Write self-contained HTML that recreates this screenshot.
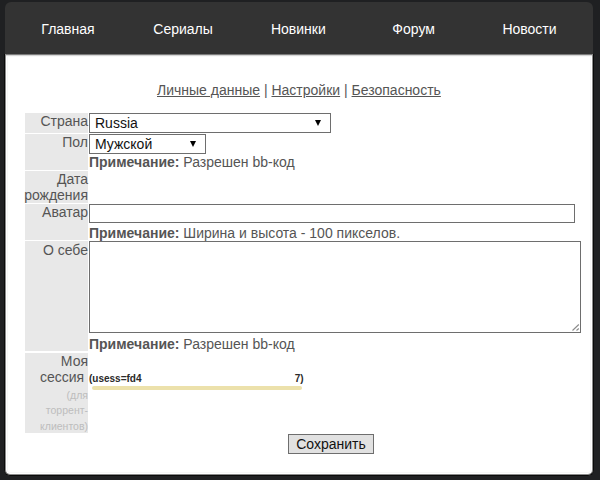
<!DOCTYPE html>
<html><head><meta charset="utf-8">
<style>
*{box-sizing:border-box}
html,body{margin:0;padding:0}
body{width:600px;height:480px;background:#1f2022;position:relative;overflow:hidden;font-family:"Liberation Sans",sans-serif;font-size:14px;line-height:16px;color:#555}
#wrap{position:absolute;left:4px;top:54px;width:590px;height:422px;border-radius:0 0 6px 6px;background:#fff;border:1px solid #0a0a0a;border-top:none;box-shadow:inset 1px 0 #8a8a8a,inset -1px 0 #8a8a8a,inset 0 -1px #8a8a8a,inset 2px 0 #fff,inset -2px 0 #fff,inset 0 -2px #fff,inset 3px 0 #f7f7f7,inset -3px 0 #f7f7f7,inset 0 -3px #f7f7f7}
#hdr{position:absolute;left:5px;top:2px;width:588px;height:52px;background:#333;border-radius:6px 6px 0 0}
.a{position:absolute;white-space:nowrap}
.ni{position:absolute;top:21px;color:#fff;text-align:center;width:115px;white-space:nowrap}
.cell{position:absolute;left:25px;width:63px;background:#e8e8e8}
.lb{position:absolute;right:0;text-align:right;white-space:nowrap;color:#555}
.box{position:absolute;border:1px solid #6e6e6e;background:#fff}
.arr{position:absolute;width:0;height:0;border-left:3.5px solid transparent;border-right:3.5px solid transparent;border-top:6px solid #000}
.note{position:absolute;left:89px;white-space:nowrap;color:#555}
.sm{position:absolute;right:0;text-align:right;white-space:nowrap;font-size:10.5px;line-height:15.5px;color:#bdbdbd}
</style></head><body>
<div id="wrap"></div>
<div id="hdr"></div>
<div style="position:absolute;left:6px;top:54px;width:586px;height:3px;background:linear-gradient(#7a7a7a 0,#7a7a7a 1px,#d6d6d6 1px,#d6d6d6 2px,#f8f8f8 2px)"></div>
<div class="ni" style="left:10.5px">Главная</div>
<div class="ni" style="left:125.6px">Сериалы</div>
<div class="ni" style="left:240.8px">Новинки</div>
<div class="ni" style="left:356.1px">Форум</div>
<div class="ni" style="left:472px">Новости</div>

<div class="a" style="left:157px;top:82px;color:#555"><u>Личные данные</u> | <u>Настройки</u> | <u>Безопасность</u></div>

<!-- label cells -->
<div class="cell" style="top:113px;height:20px"><div class="lb" style="top:0px">Страна</div></div>
<div class="cell" style="top:134px;height:36px"><div class="lb" style="top:0px">Пол</div></div>
<div class="cell" style="top:171px;height:32px"><div class="lb" style="top:0px">Дата<br>рождения</div></div>
<div class="cell" style="top:204px;height:36px"><div class="lb" style="top:0px">Аватар</div></div>
<div class="cell" style="top:241px;height:110px"><div class="lb" style="top:1px">О себе</div></div>
<div class="cell" style="top:353px;height:80px"><div class="lb" style="top:0px">Моя<br>сессия&nbsp;</div><div class="sm" style="top:34.5px">(для<br>торрент-<br>клиентов)</div></div>

<!-- selects -->
<div class="box" style="left:89px;top:113px;width:242px;height:20px"></div>
<div class="a" style="left:95px;top:115px;color:#111">Russia</div>
<div class="arr" style="left:315px;top:120px"></div>
<div class="box" style="left:89px;top:134px;width:117px;height:20px"></div>
<div class="a" style="left:95px;top:135.5px;color:#111">Мужской</div>
<div class="arr" style="left:190px;top:140.5px"></div>

<div class="note" style="top:154px"><b>Примечание:</b> Разрешен bb-код</div>

<div class="box" style="left:89px;top:204px;width:486px;height:19px"></div>
<div class="note" style="top:225px"><b>Примечание:</b> Ширина и высота - 100 пикселов.</div>

<div class="box" style="left:89px;top:241px;width:492px;height:92px"></div>
<svg class="a" style="left:570px;top:322px" width="10" height="10" viewBox="0 0 10 10"><path d="M2.5 8.5 L8.8 2.5 M6.5 8.5 L8.8 6.5" stroke="#8c8c8c" stroke-width="1.1" fill="none"/></svg>
<div class="note" style="top:336px"><b>Примечание:</b> Разрешен bb-код</div>

<div class="a" style="left:89px;top:371px;font-size:10px;font-weight:bold;color:#2a2a2a">(usess=fd4</div>
<div class="a" style="left:294.8px;top:371px;font-size:10px;font-weight:bold;color:#2a2a2a">7)</div>
<div class="a" style="left:91.5px;top:386px;width:210.5px;height:4px;border-radius:2px;background:#ece1ab"></div>

<div class="a" style="left:288px;top:434px;width:86px;height:20px;border:1px solid #6e6e6e;background:#e1e1e1;color:#111;text-align:center;line-height:18px">Сохранить</div>
</body></html>
